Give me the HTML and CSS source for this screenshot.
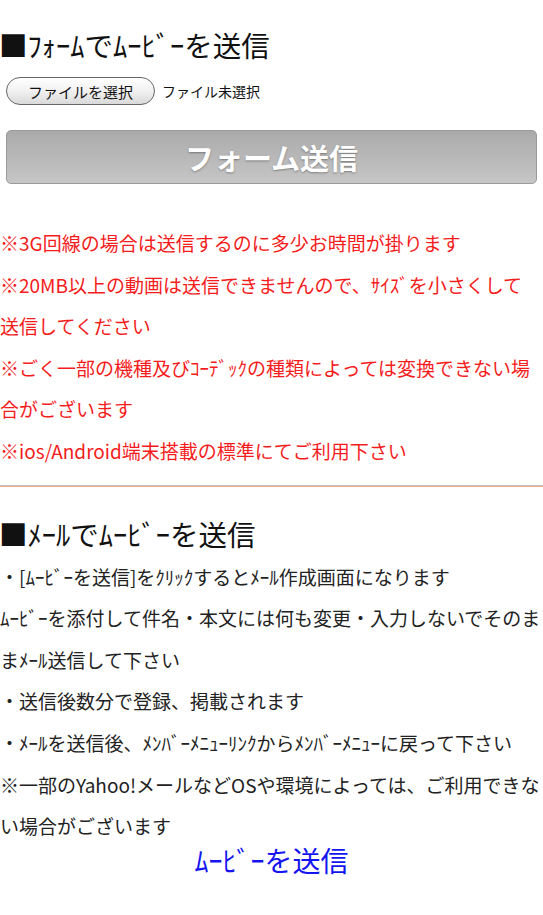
FILE: index.html
```html
<!DOCTYPE html>
<html lang="ja">
<head>
<meta charset="utf-8">
<title>ﾑｰﾋﾞｰを送信</title>
<link rel="stylesheet" href="styles.css">
</head>
<body>
<div class="page">
  <section class="form-sec">
    <h2 class="title">■ﾌｫｰﾑでﾑｰﾋﾞｰを送信</h2>
    <div class="file-row">
      <span class="file-btn">ファイルを選択</span>
      <span class="file-none">ファイル未選択</span>
    </div>
    <div class="submit">フォーム送信</div>
    <p class="notes red">※3G回線の場合は送信するのに多少お時間が掛ります<br>※20MB以上の動画は送信できませんので、ｻｲｽﾞを小さくして<br>送信してください<br>※ごく一部の機種及びｺｰﾃﾞｯｸの種類によっては変換できない場<br>合がございます<br>※ios/Android端末搭載の標準にてご利用下さい</p>
  </section>
  <div class="sep"></div>
  <section class="mail-sec">
    <h2 class="title">■ﾒｰﾙでﾑｰﾋﾞｰを送信</h2>
    <p class="notes dark">・[ﾑｰﾋﾞｰを送信]をｸﾘｯｸするとﾒｰﾙ作成画面になります<br>ﾑｰﾋﾞｰを添付して件名・本文には何も変更・入力しないでそのま<br>まﾒｰﾙ送信して下さい<br>・送信後数分で登録、掲載されます<br>・ﾒｰﾙを送信後、ﾒﾝﾊﾞｰﾒﾆｭｰﾘﾝｸからﾒﾝﾊﾞｰﾒﾆｭｰに戻って下さい<br>※一部のYahoo!メールなどOSや環境によっては、ご利用できな<br>い場合がございます</p>
    <a class="send-link" href="#">ﾑｰﾋﾞｰを送信</a>
  </section>
</div>
</body>
</html>
```
FILE: styles.css
```css
html, body {
  margin: 0;
  padding: 0;
  background: #fff;
  overflow: hidden;
}
body {
  width: 543px;
  height: 915px;
  font-family: "Noto Sans CJK JP", "Noto Sans", sans-serif;
}
.page {
  width: 543px;
}
.title {
  margin: 0 0 0 -1px;
  font-size: 28.5px;
  font-weight: normal;
  line-height: 40px;
  color: #111;
  white-space: nowrap;
}
.form-sec {
  padding-top: 25px;
}
.file-row {
  display: flex;
  align-items: center;
  gap: 7px;
  margin-top: 12px;
  margin-left: 6px;
}
.file-btn {
  display: inline-flex;
  align-items: center;
  justify-content: center;
  box-sizing: border-box;
  width: 149px;
  height: 28px;
  border: 1px solid #666;
  border-radius: 14px;
  background: linear-gradient(#ffffff, #f1f1f1 50%, #d9d9d9);
  font-size: 15px;
  color: #111;
}
.file-none {
  font-size: 14px;
  color: #111;
}
.submit {
  box-sizing: border-box;
  margin: 25px 6px 0 6px;
  height: 54px;
  border: 1px solid #9a9a9a;
  border-radius: 5px;
  background: linear-gradient(#aaaaaa, #c6c6c6);
  display: flex;
  align-items: center;
  justify-content: center;
  color: #fff;
  font-size: 29px;
  font-weight: bold;
  text-shadow: 0 1px 2px rgba(0, 0, 0, 0.35);
}
.notes {
  margin: 0;
  font-size: 19px;
  line-height: 41.6px;
  white-space: nowrap;
}
.red {
  color: #f51c1c;
  margin-top: 38px;
}
.dark {
  color: #222;
  margin-top: 2px;
}
.sep {
  margin-top: 13px;
  height: 1px;
  background: #c4c4c4;
  border-bottom: 1px solid #f3ab8e;
}
.mail-sec {
  padding-top: 27px;
}
.send-link {
  display: block;
  text-align: center;
  font-size: 28px;
  line-height: 28px;
  color: #1414f0;
  text-decoration: none;
  margin-top: -1px;
}
```
